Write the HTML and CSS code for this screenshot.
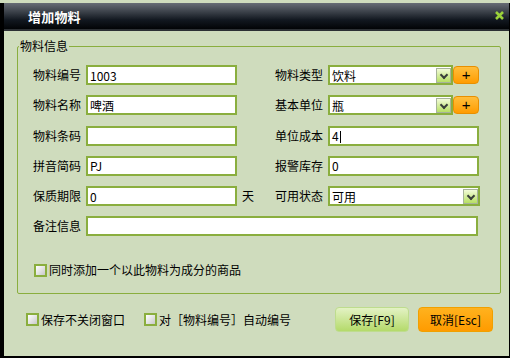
FILE: index.html
```html
<!DOCTYPE html>
<html lang="zh-CN">

<head>
    <meta charset="UTF-8">
    <title>增加物料</title>
    <link rel="stylesheet" href="styles.css">
</head>

<body>
    <div class="dialog">
        <div class="titlebar">
            <h1>增加物料</h1>
            <span class="close">
                <svg width="9" height="9" viewBox="0 0 9 9">
                    <path d="M1 1 L8 8 M8 1 L1 8" stroke="#9bd23a" stroke-width="2.6" />
                </svg>
            </span>
        </div>

        <fieldset class="info">
            <legend>物料信息</legend>
            <div class="grid">
                <label>物料编号</label>
                <input type="text" value="1003">
                <span></span>
                <label>物料类型</label>
                <div class="pick">
                    <div class="select short"><span>饮料</span><i class="arrow"></i></div>
                    <button class="plus">+</button>
                </div>

                <label>物料名称</label>
                <input type="text" value="啤酒">
                <span></span>
                <label>基本单位</label>
                <div class="pick">
                    <div class="select short"><span>瓶</span><i class="arrow"></i></div>
                    <button class="plus">+</button>
                </div>

                <label>物料条码</label>
                <input type="text" value="">
                <span></span>
                <label>单位成本</label>
                <div class="field">4<b class="caret"></b></div>

                <label>拼音简码</label>
                <input type="text" value="PJ">
                <span></span>
                <label>报警库存</label>
                <input type="text" value="0">

                <label>保质期限</label>
                <input type="text" value="0">
                <span class="unit">天</span>
                <label>可用状态</label>
                <div class="select"><span>可用</span><i class="arrow"></i></div>

                <label>备注信息</label>
                <input type="text" class="wide" value="">
            </div>
            <div class="check inner"><i class="box"></i>同时添加一个以此物料为成分的商品</div>
        </fieldset>

        <div class="footer">
            <div class="check"><i class="box"></i>保存不关闭窗口</div>
            <div class="check"><i class="box"></i>对［物料编号］自动编号</div>
            <div class="buttons">
                <button class="btn save">保存[F9]</button>
                <button class="btn cancel">取消[Esc]</button>
            </div>
        </div>
    </div>
</body>

</html>
```

FILE: styles.css
```css
body {
    margin: 0;
    background-color: #cfdcbd;
    font-family: "Noto Sans CJK SC", "Liberation Sans", sans-serif;
    font-size: 12px;
    color: #000;
}

.dialog {
    margin-top: 3px;
    height: 355px;
    box-sizing: border-box;
    border-left: 4px solid #000;
    border-right: 1px solid #000;
    border-bottom: 2px solid #000;
}

.titlebar {
    height: 26px;
    display: flex;
    align-items: center;
    justify-content: space-between;
    padding: 0 5px 0 24px;
    background: linear-gradient(#676c75, #3a4048 35%, #121820 65%, #020406);
    border-bottom: 2px solid #2c3034;
}

.titlebar h1 {
    margin: 0;
    font-size: 13px;
    font-weight: bold;
    color: #fff;
    letter-spacing: 0.2px;
}

.close {
    display: flex;
    margin-top: -1px;
}

/* 物料信息 */
.info {
    margin: 8px 8px 0 13px;
    padding: 12px 0 16px 0;
    border: 1px solid #8aae3e;
    border-radius: 2px;
    min-width: 0;
}

.info legend {
    margin-left: 1px;
    padding: 0 1px;
    font-size: 12px;
    line-height: 14px;
}

.grid {
    display: grid;
    grid-template-columns: 68px 151px 35px 56px 151px;
    grid-auto-rows: 20px;
    row-gap: 10.3px;
}

.grid label {
    text-align: right;
    padding-right: 5px;
    line-height: 20px;
    white-space: nowrap;
}

.grid input,
.field {
    box-sizing: border-box;
    height: 20px;
    width: 100%;
    margin: 0;
    padding: 0 2px;
    border: 2px solid #8aae3e;
    background: #fff;
    font-family: "Noto Sans CJK SC", sans-serif;
    font-size: 12px;
    outline: none;
}

.field {
    line-height: 16px;
}

.caret {
    display: inline-block;
    width: 1px;
    height: 12px;
    margin-left: 1px;
    vertical-align: -2px;
    background: #000;
}

.grid .wide {
    grid-column: 2 / 6;
    width: 392px;
}

.unit {
    line-height: 20px;
    padding-left: 5px;
}

.pick {
    display: flex;
    align-items: center;
}

.select {
    box-sizing: border-box;
    height: 20px;
    width: 152px;
    display: flex;
    align-items: center;
    justify-content: space-between;
    border: 2px solid #8aae3e;
    background: #fff;
    padding-left: 2px;
}

.select.short {
    width: 126px;
}

.arrow {
    width: 15px;
    height: 15px;
    box-sizing: border-box;
    border: 1px solid #a7b39a;
    background: linear-gradient(#f2fbd8, #b7e063);
    position: relative;
}

.arrow::after {
    content: "";
    position: absolute;
    left: 4px;
    top: 3px;
    width: 4px;
    height: 4px;
    border-right: 2px solid #3a3f3a;
    border-bottom: 2px solid #3a3f3a;
    transform: rotate(45deg);
}

.plus {
    width: 26px;
    height: 18px;
    margin: 0;
    padding: 0;
    border: 1px solid #e88f00;
    border-radius: 4px;
    background: linear-gradient(#ffbe3c, #ff9c00);
    font-size: 15px;
    line-height: 14px;
    color: #000;
}

/* 复选框 */
.check {
    display: flex;
    align-items: center;
    white-space: nowrap;
    line-height: 14px;
}

.check .box {
    width: 13px;
    height: 13px;
    box-sizing: border-box;
    margin-right: 2px;
    border: 2px solid #8aae3e;
    background: linear-gradient(135deg, #fff, #c9c9c9);
}

.check.inner {
    margin: 27px 0 0 16px;
}

.footer {
    display: flex;
    align-items: center;
    margin: 13px 16px 0 22px;
}

.footer .check + .check {
    margin-left: 19px;
}

.buttons {
    display: flex;
    gap: 9px;
    margin-left: auto;
}

.btn {
    height: 25px;
    margin: 0;
    padding: 0;
    border-radius: 4px;
    font-family: "Noto Sans CJK SC", sans-serif;
    font-size: 12px;
    color: #000;
}

.save {
    width: 74px;
    border: 1px solid #bedc8e;
    background: linear-gradient(#e3f2c4, #b4da6a);
}

.cancel {
    width: 75px;
    border: 1px solid #f0a000;
    background: linear-gradient(#ffb21e, #ff9b00);
}
```
